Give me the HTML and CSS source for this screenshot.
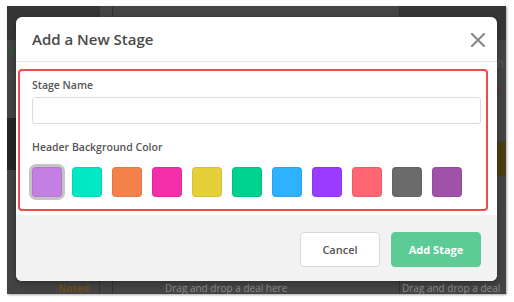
FILE: index.html
```html
<!DOCTYPE html>
<html lang="en">
<head>
    <meta charset="UTF-8">
    <title>Add a New Stage</title>
    <link rel="stylesheet" href="styles.css">
</head>
<body>

<div class="frame">
    <div class="backdrop">
        <!-- page behind the dimmed overlay -->
        <div class="page">
            <div class="col col-left">
                <div class="row-top"></div>
                <div class="row-text">$</div>
                <div class="row-text">&ndash;</div>
                <div class="row-dark"></div>
                <div class="row-foot"><span class="note">Noted</span></div>
            </div>
            <div class="col col-thin"></div>
            <div class="col col-main">
                <div class="drop">Drag and drop a deal here</div>
            </div>
            <div class="col col-right">
                <div class="row-top"></div>
                <div class="row-text">Search</div>
                <div class="row-red">&ndash;</div>
                <div class="row-band"></div>
                <div class="drop">Drag and drop a deal</div>
            </div>
        </div>

        <div class="modal">
            <div class="modal-header">
                <h2>Add a New Stage</h2>
                <svg class="close" width="14" height="14" viewBox="0 0 14 14">
                    <path d="M1 1 L13 13 M13 1 L1 13" stroke="#8a8a8a" stroke-width="2.2" stroke-linecap="round"/>
                </svg>
            </div>
            <div class="modal-body">
                <div class="highlight">
                    <label for="stageName">Stage Name</label>
                    <input type="text" id="stageName">
                    <label>Header Background Color</label>
                    <div class="swatches">
                        <span class="swatch selected" style="background:#c47fe2"></span>
                        <span class="swatch" style="background:#00e8c4"></span>
                        <span class="swatch" style="background:#f5824a"></span>
                        <span class="swatch" style="background:#f52fa9"></span>
                        <span class="swatch" style="background:#e6d03a"></span>
                        <span class="swatch" style="background:#00d18f"></span>
                        <span class="swatch" style="background:#2eb1ff"></span>
                        <span class="swatch" style="background:#9a3cff"></span>
                        <span class="swatch" style="background:#ff6671"></span>
                        <span class="swatch" style="background:#6b6b6b"></span>
                        <span class="swatch" style="background:#a052a8"></span>
                    </div>
                </div>
            </div>
            <div class="modal-footer">
                <button class="btn btn-cancel">Cancel</button>
                <button class="btn btn-add">Add Stage</button>
            </div>
        </div>
    </div>
</div>

</body>
</html>
```

FILE: styles.css
```css
body {
    margin: 0;
    background-color: #ffffff;
    font-family: "Open Sans", "Liberation Sans", sans-serif;
}
.frame {
    padding: 6px 8px 8px 7px;
}
.backdrop {
    position: relative;
    width: 499px;
    height: 288px;
    background-color: #3d3d3d;
    overflow: hidden;
    box-shadow: 1px 1px 2px rgba(0, 0, 0, 0.35);
}
.page {
    display: flex;
    height: 100%;
}
.col {
    display: flex;
    flex-direction: column;
    border-right: 1px solid #333;
}
.col-left {
    width: 92px;
    background-color: #434343;
}
.col-thin {
    width: 12px;
    background-color: #444;
}
.col-main {
    flex: 1;
    background-color: #444;
    justify-content: flex-end;
}
.col-right {
    width: 106px;
    background-color: #434343;
    border-right: none;
}
.row-top {
    height: 34px;
    background-color: #363636;
}
.row-text {
    height: 24px;
    color: #2e5a3c;
    font-size: 12px;
    padding-left: 2px;
    line-height: 24px;
}
.col-right .row-text {
    color: #5a5a5a;
    text-align: right;
    padding-right: 2px;
    margin-top: 12px;
}
.row-red {
    height: 26px;
    color: #6a2a2a;
    text-align: right;
    padding-right: 3px;
    line-height: 26px;
    font-size: 12px;
}
.row-dark {
    height: 52px;
    margin-top: 30px;
    background-color: #262626;
}
.row-band {
    height: 34px;
    margin-top: 40px;
    background-color: #4a3c14;
}
.row-foot {
    margin-top: auto;
    text-align: right;
    padding-right: 10px;
    line-height: 12px;
}
.note {
    color: #6e4a1c;
    font-size: 10px;
    font-weight: 700;
}
.drop {
    margin-top: auto;
    color: #8c8c8c;
    font-size: 10px;
    line-height: 12px;
    padding: 0 0 0 52px;
    white-space: nowrap;
}
.col-right .drop {
    padding-left: 2px;
}

/* modal */
.modal {
    position: absolute;
    left: 9px;
    top: 11px;
    width: 481px;
    height: 264px;
    background-color: #fff;
    border-radius: 6px;
    display: flex;
    flex-direction: column;
    overflow: hidden;
    box-shadow: 0 2px 6px rgba(0, 0, 0, 0.3);
}
.modal-header {
    height: 44px;
    border-bottom: 1px solid #e6e6e6;
    display: flex;
    align-items: center;
    justify-content: space-between;
    padding: 0 12px 0 16px;
}
.modal-header h2 {
    margin: 0;
    font-size: 15px;
    font-weight: 600;
    color: #4a4a4a;
}
.close {
    margin-top: 2px;
}
.modal-body {
    height: 153px;
    padding: 7px 0 0 2px;
    box-sizing: border-box;
}
.highlight {
    width: 470px;
    height: 142px;
    box-sizing: border-box;
    border: 2px solid #f24a4a;
    border-radius: 4px;
    padding: 6px 5px 0 12px;
    display: flex;
    flex-direction: column;
}
label {
    font-size: 10.5px;
    font-weight: 600;
    color: #555;
    line-height: 16px;
}
input {
    margin: 4px 0 15px 0;
    height: 27px;
    width: 449px;
    box-sizing: border-box;
    border: 1px solid #dcdcdc;
    border-radius: 3px;
}
.swatches {
    display: flex;
    gap: 10px;
    margin-top: 12px;
}
.swatch {
    width: 30px;
    height: 30px;
    border-radius: 4px;
    box-sizing: border-box;
    border: 1px solid rgba(0, 0, 0, 0.08);
}
.swatch.selected {
    box-shadow: 0 0 0 3px #c4c4c4;
}
.modal-footer {
    flex: 1;
    background-color: #f2f2f2;
    display: flex;
    justify-content: flex-end;
    align-items: flex-start;
    gap: 11px;
    padding: 17px 16px 0 0;
}
.btn {
    height: 35px;
    border-radius: 4px;
    font-family: "Open Sans", "Liberation Sans", sans-serif;
    font-size: 11px;
    font-weight: 600;
}
.btn-cancel {
    width: 80px;
    background-color: #fff;
    border: 1px solid #d9d9d9;
    color: #555;
}
.btn-add {
    width: 90px;
    background-color: #5ccb95;
    border: 1px solid #5ccb95;
    color: #fff;
    font-weight: 700;
}
```
